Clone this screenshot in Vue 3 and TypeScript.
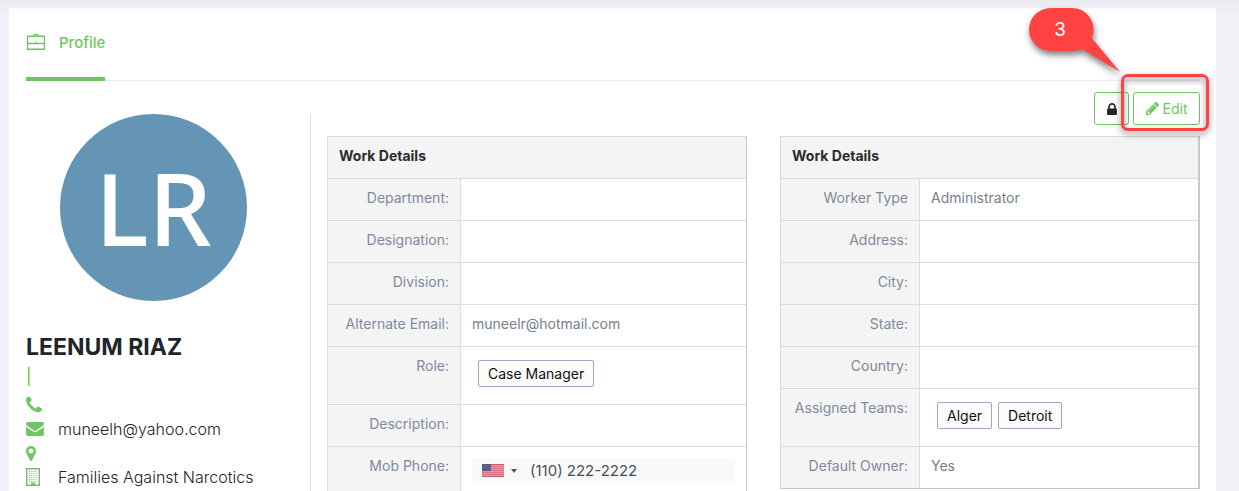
<script setup lang="ts">
import { ref } from 'vue'

interface Row {
  label: string
  value?: string
  tags?: string[]
  phone?: boolean
}

const phone = ref('(110) 222-2222')

const tables: { key: string; rows: Row[] }[] = [
  {
    key: 'primary',
    rows: [
      { label: 'Department:' },
      { label: 'Designation:' },
      { label: 'Division:' },
      { label: 'Alternate Email:', value: 'muneelr@hotmail.com' },
      { label: 'Role:', tags: ['Case Manager'] },
      { label: 'Description:' },
      { label: 'Mob Phone:', phone: true },
    ],
  },
  {
    key: 'secondary',
    rows: [
      { label: 'Worker Type', value: 'Administrator' },
      { label: 'Address:' },
      { label: 'City:' },
      { label: 'State:' },
      { label: 'Country:' },
      { label: 'Assigned Teams:', tags: ['Alger', 'Detroit'] },
      { label: 'Default Owner:', value: 'Yes' },
    ],
  },
]
</script>

<template>
  <div class="page">
    <main class="card">
      <nav class="tabs">
        <a class="tab" href="#profile" aria-current="page">
          <svg class="tab-icon" viewBox="0 0 19 16" fill="none" stroke="currentColor" aria-hidden="true">
            <path d="M1.500 2.300h17v13h-17zM1.500 9.500h17" stroke-width="1.400" />
            <path d="M7.500 1.800c0-.8.500-1.200 1.300-1.200h2.400c.8 0 1.300.4 1.300 1.200" stroke-width="1.200" />
            <path d="M10 7v1.500" />
          </svg>
          <span>Profile</span>
        </a>
      </nav>

      <div class="body">
        <aside class="sidebar">
          <div class="avatar">LR</div>
          <h1 class="name">LEENUM RIAZ</h1>
          <div class="divider">|</div>
          <ul class="contacts">
            <li>
              <svg class="i-phone" viewBox="192 192 1408 1408" fill="currentColor" aria-hidden="true">
                <path d="M1600 1240q0 27-10 70.500t-21 68.500q-21 50-122 106-94 51-186 51-27 0-53-3.500t-57.500-12.500-47-14.500-55.500-20.500-49-18q-98-35-175-83-127-79-264-216t-216-264q-48-77-83-175-3-9-18-49t-20.500-55.500-14.500-47-12.500-57.500-3.500-53q0-92 51-186 56-101 106-122 25-11 68.500-21t70.500-10q14 0 21 3 18 6 53 76 11 19 30 54t35 63.500 31 53.500q3 4 17.500 25t21.500 35.500 7 28.500q0 20-28.500 50t-62 55-62 53-28.500 46q0 9 5 22.500t8.500 20.500 14 24 11.500 19q76 137 174 235t235 174q2 1 19 11.500t24 14 20.500 8.500 22.500 5q18 0 46-28.500t53-62 55-62 50-28.500q14 0 28.500 7t35.500 21.500 25 17.500q25 15 53.500 31t63.500 35 54 30q70 35 76 53 3 7 3 21z" />
              </svg>
            </li>
            <li>
              <svg class="i-mail" viewBox="0 256 1792 1408" fill="currentColor" aria-hidden="true">
                <path d="M1792 710v794q0 66-47 113t-113 47h-1472q-66 0-113-47t-47-113v-794q44 49 101 87 362 246 497 345 57 42 92.500 65.500t94.500 48 110 24.500h2q51 0 110-24.500t94.500-48 92.500-65.500q170-123 498-345 57-39 100-87zm0-294q0 79-49 151t-122 123q-376 261-468 325-10 7-42.500 31t-54 38.500-52 32.500-57.500 27-50 9h-2q-23 0-50-9t-57.500-27-52-32.500-54-38.500-42.500-31q-91-64-262-182.500t-205-142.500q-62-42-117-115.500t-55-136.500q0-78 41.500-130t118.500-52h1472q65 0 112.500 47t47.500 113z" />
              </svg>
              <span>muneelh@yahoo.com</span>
            </li>
            <li>
              <svg class="i-pin" viewBox="384 128 1024 1536" fill="currentColor" aria-hidden="true">
                <path d="M1152 640q0-106-75-181t-181-75-181 75-75 181 75 181 181 75 181-75 75-181zm256 0q0 109-33 179l-364 774q-16 33-47.500 52t-67.500 19-67.500-19-46.500-52l-365-774q-33-70-33-179 0-212 150-362t362-150 362 150 150 362z" />
              </svg>
            </li>
            <li>
              <svg class="i-building" viewBox="0 0 14 18" aria-hidden="true">
                <path d="M.7.7h12.600v16.600h-12.600z" fill="none" stroke="currentColor" stroke-width="1.400" />
                <path d="M3 3.500h8M3 5.500h8M3 7.500h8M3 9.500h8M3 11.500h8M3 13.500h8" stroke="currentColor" stroke-dasharray="1.200 1" opacity=".8" />
                <path d="M5 14.500h4v3h-4z" fill="currentColor" />
              </svg>
              <span>Families Against Narcotics</span>
            </li>
          </ul>
        </aside>

        <section class="details">
          <div class="actions">
            <button class="btn btn-lock" type="button" aria-label="Lock">
              <svg class="i-lock" viewBox="320 128 1152 1408" fill="currentColor" aria-hidden="true">
                <path d="M640 768h512v-192q0-106-75-181t-181-75-181 75-75 181v192zm832 96v576q0 40-28 68t-68 28h-960q-40 0-68-28t-28-68v-576q0-40 28-68t68-28h32v-192q0-184 132-316t316-132 316 132 132 316v192h32q40 0 68 28t28 68z" />
              </svg>
            </button>
            <div class="edit-wrap">
              <button class="btn btn-edit" type="button">
                <svg class="i-pencil" viewBox="128 149 1515 1515" fill="currentColor" aria-hidden="true">
                  <path d="M491 1536l91-91-235-235-91 91v107h128v128h107zm523-928q0-22-22-22-10 0-17 7l-542 542q-7 7-7 17 0 22 22 22 10 0 17-7l542-542q7-7 7-17zm-54-192l416 416-832 832h-416v-416zm683 96q0 53-37 90l-166 166-416-416 166-165q36-38 90-38 53 0 91 38l235 234q37 39 37 91z" />
                </svg>
                <span>Edit</span>
              </button>
              <div class="marker"></div>
              <div class="callout">
                <svg viewBox="0 0 92 65" aria-hidden="true">
                  <path d="M21.500 0h21a21.500 21.500 0 0 1 20.300 30L91 64 53 41q-5 2-10.500 2h-21a21.500 21.500 0 0 1 0-43z" fill="#ff4343" />
                </svg>
                <span class="callout-number">3</span>
              </div>
            </div>
          </div>

          <div class="tables">
            <table v-for="t in tables" :key="t.key" class="info" :class="t.key">
              <colgroup>
                <col class="label-col" />
                <col />
              </colgroup>
              <thead>
                <tr>
                  <th class="title" colspan="2">Work Details</th>
                </tr>
              </thead>
              <tbody>
                <tr v-for="row in t.rows" :key="row.label">
                  <th class="label" scope="row">
                    <label v-if="row.phone" for="mob-phone">{{ row.label }}</label>
                    <template v-else>{{ row.label }}</template>
                  </th>
                  <td class="value">
                    <div v-if="row.tags" class="tags">
                      <span v-for="tag in row.tags" :key="tag" class="tag">{{ tag }}</span>
                    </div>
                    <div v-else-if="row.phone" class="phone">
                      <button class="country" type="button" aria-label="United States">
                        <svg class="flag" viewBox="0 0 22 13" aria-hidden="true">
                          <path d="M0 0h22v13h-22z" fill="#e0949b" />
                          <path d="M0 .5h22M0 12.500h22" stroke="#cb5d69" />
                          <path d="M0 2.500h22M0 4.500h22M0 6.500h22M0 8.500h22M0 10.500h22" stroke="#d77983" />
                          <path d="M0 0h9v7h-9z" fill="#5d5b8c" />
                        </svg>
                        <svg class="caret" viewBox="0 0 6 4" aria-hidden="true">
                          <path d="M0 0h6l-3 4z" fill="#555" />
                        </svg>
                      </button>
                      <input id="mob-phone" v-model="phone" type="tel" />
                    </div>
                    <template v-else>{{ row.value }}</template>
                  </td>
                </tr>
              </tbody>
            </table>
          </div>
        </section>
      </div>
    </main>
  </div>
</template>

<style>
body {
  margin: 0;
  background: #f1f2f7;
}
</style>

<style scoped>
* {
  box-sizing: border-box;
}

.page {
  display: flex;
  height: 100vh;
  padding: 8px 23px 0 9px;
  overflow: hidden;
  background: linear-gradient(#e9eaef, #eeeff4 8px, #f1f2f7 16px);
  color: #212529;
  font-family: Inter, "Noto Sans", sans-serif;
  font-size: 14px;
  line-height: 20px;
}

.card {
  flex: 1;
  min-width: 0;
  height: max-content;
  min-height: 100%;
  padding: 0 16px 0 17px;
  background: linear-gradient(#fcfcfd, #fff 8px);
}

.tabs {
  display: flex;
  height: 73px;
  border-bottom: 1px solid #ebedf2;
}

.tab {
  display: flex;
  gap: 14px;
  height: 73px;
  padding-bottom: 1px;
  border-bottom: 4px solid #6fc562;
  color: #6fc562;
  font-size: 15px;
  font-weight: 500;
  line-height: 69px;
  text-decoration: none;
}

.tab-icon {
  width: 19px;
  height: 16px;
  margin-top: 26px;
}

.body {
  display: flex;
  gap: 16px;
}

.sidebar {
  flex: 0 0 285px;
  margin-top: 33px;
  padding-right: 29px;
  border-right: 1px solid #dcdcdc;
}

.avatar {
  width: 187px;
  height: 187px;
  margin: 0 auto;
  border-radius: 50%;
  background: #6595b4;
  color: #fff;
  font-family: "Noto Sans", sans-serif;
  font-size: 100px;
  font-weight: 500;
  line-height: 187px;
  text-align: center;
}

.name {
  margin: 30px 0 0;
  font-size: 23px;
  font-weight: 700;
  line-height: 32px;
  white-space: nowrap;
}

.divider {
  color: #8fc050;
  font-size: 16px;
  font-weight: 500;
  line-height: 26px;
}

.contacts {
  margin: 4px 0 0;
  padding: 0;
  list-style: none;
}

.contacts li {
  display: grid;
  grid-template-columns: 32px 1fr;
  align-items: center;
  height: 24px;
  color: #6fc562;
}

.contacts span {
  color: #212529;
  font-size: 16px;
  font-weight: 300;
  white-space: nowrap;
}

.i-phone {
  width: 16px;
  height: 16px;
}

.i-mail {
  width: 18px;
  height: 14px;
}

.i-pin {
  width: 10px;
  height: 15px;
}

.i-building {
  width: 14px;
  height: 18px;
}

.details {
  flex: 1;
  min-width: 0;
  padding-top: 11px;
}

.actions {
  display: flex;
  justify-content: flex-end;
  gap: 4px;
}

.btn {
  display: flex;
  align-items: center;
  justify-content: center;
  gap: 4px;
  height: 33px;
  padding: 0;
  border: 1px solid #6fc562;
  border-radius: 3px;
  background: #fff;
  color: #6fc562;
  font: inherit;
  font-size: 14px;
}

.btn-lock {
  width: 35px;
  color: #212529;
}

.btn-edit {
  width: 67px;
}

.i-lock {
  width: 10px;
  height: 12px;
}

.i-pencil {
  width: 13px;
  height: 13px;
}

.edit-wrap {
  position: relative;
}

.marker {
  position: absolute;
  inset: -18px -9px -6px -12px;
  border: 3px solid #ff4343;
  border-radius: 7px;
  filter: drop-shadow(0 3px 3px rgb(0 0 0 / 50%));
  pointer-events: none;
}

.callout {
  position: absolute;
  top: -84px;
  left: -104px;
  width: 92px;
  height: 65px;
  filter: drop-shadow(1px 4px 3px rgb(0 0 0 / 50%));
  pointer-events: none;
}

.callout svg {
  display: block;
}

.callout-number {
  position: absolute;
  top: 0;
  left: 0;
  width: 62px;
  color: #fff;
  font-family: "Liberation Sans", sans-serif;
  font-size: 20px;
  line-height: 42px;
  text-align: center;
}

.tables {
  display: grid;
  grid-template-columns: 1fr 1fr;
  gap: 33px;
  align-items: start;
  margin-top: 11px;
}

.info {
  width: 100%;
  border: 0 solid #c9c9c9;
  border-right-width: 1px;
  border-bottom-width: 1px;
  border-spacing: 0;
  table-layout: fixed;
}

.secondary {
  border-right-width: 2px;
}

.primary .label-col {
  width: 133px;
}

.secondary .label-col {
  width: 139px;
}

.title,
.label,
.value {
  padding: 9px 11px 12px;
  border-top: 1px solid #dcdcdc;
  border-left: 1px solid #dcdcdc;
  vertical-align: top;
}

.title {
  background: #f4f4f4;
  color: #2b2b2b;
  font-weight: 700;
  text-align: left;
}

.label {
  background: #f4f4f4;
  color: #7f8a9c;
  font-weight: 400;
  text-align: right;
  white-space: nowrap;
}

.value {
  color: #75808c;
}

.tags {
  display: flex;
  gap: 6px;
  margin: 4px 0 5px 6px;
}

.tag {
  padding: 0 9px;
  border: 1px solid #a7a3c2;
  border-radius: 2px;
  background: #fcfcfc;
  color: #111;
  line-height: 25px;
}

.phone {
  display: flex;
  height: 25px;
  margin-top: 2px;
  background: #f9f9f9;
}

.country {
  display: flex;
  flex: none;
  align-items: center;
  gap: 7px;
  width: 58px;
  padding: 0 0 0 10px;
  border: 0;
  background: none;
}

.flag {
  width: 22px;
  height: 13px;
}

.caret {
  width: 6px;
  height: 4px;
}

.phone input {
  flex: 1;
  min-width: 0;
  padding: 0;
  border: 0;
  background: none;
  color: #495057;
  font: inherit;
  font-size: 15px;
}
</style>
